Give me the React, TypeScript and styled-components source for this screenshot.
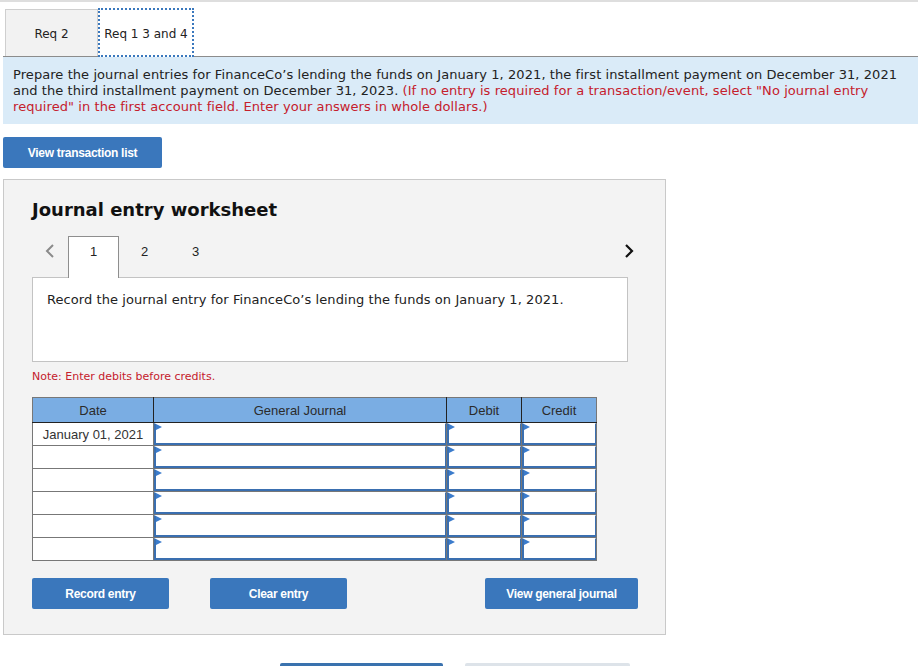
import * as React from "react";
import styled, { createGlobalStyle } from "styled-components";

const GlobalStyle = createGlobalStyle`
	html, body {
		margin: 0;
		padding: 0;
		background: #fff;
	}
	body {
		font-family: "DejaVu Sans", Verdana, sans-serif;
		color: #222;
	}
`;

const Page = styled.div`
	width: 918px;
	border-top: 2px solid #dedede;
`;

const TabBar = styled.div`
	display: flex;
	align-items: flex-end;
	margin: 6px 0 0 3px;
	padding-left: 2px;
	height: 48px;
	border-bottom: 1px solid #8c8c8c;
`;

const ReqTab = styled.div<{ $active?: boolean }>`
	display: flex;
	align-items: center;
	justify-content: center;
	box-sizing: border-box;
	padding-top: 2px;
	height: ${p => (p.$active ? "49px" : "47px")};
	width: ${p => (p.$active ? "96px" : "93px")};
	margin-bottom: ${p => (p.$active ? "-1px" : "0")};
	font-size: 12px;
	color: #222;
	background: ${p => (p.$active ? "#fff" : "#f2f2f2")};
	border: ${p => (p.$active ? "2px dotted #3a78bd" : "1px solid #cfcfcf")};
	border-bottom: ${p => (p.$active ? "2px dotted #3a78bd" : "none")};
`;

const Info = styled.div`
	margin-left: 3px;
	padding: 10px 10px 9px 10px;
	background: #daebf8;
	font-size: 13px;
	line-height: 16px;
	letter-spacing: 0.07px;
	color: #222;
`;

const Red = styled.span`
	color: #c5202c;
`;

const BlueButton = styled.button<{ $width: number }>`
	width: ${p => p.$width}px;
	height: 31px;
	border: none;
	border-radius: 2px;
	background: #3a77bc;
	color: #fff;
	font-family: "Liberation Sans", Arial, sans-serif;
	font-weight: bold;
	font-size: 12px;
	letter-spacing: -0.3px;
	cursor: pointer;
	padding: 0;
`;

const ListRow = styled.div`
	margin: 13px 0 0 3px;
`;

const Panel = styled.div`
	margin: 11px 0 0 3px;
	width: 663px;
	box-sizing: border-box;
	background: #f3f3f3;
	border: 1px solid #c9c9c9;
	padding: 19px 0 25px 28px;
`;

const Title = styled.h2`
	margin: 0;
	font-size: 18px;
	line-height: 22px;
	font-weight: bold;
	color: #111;
`;

const StepRow = styled.div`
	display: flex;
	align-items: flex-end;
	margin-top: 15px;
	width: 615px;
	height: 41px;
`;

const Chevron = styled.div<{ $dark?: boolean }>`
	width: 36px;
	height: 41px;
	display: flex;
	align-items: center;
	justify-content: center;
	color: ${p => (p.$dark ? "#111" : "#8a8a8a")};
	svg {
		margin-top: -12px;
	}
`;

const Spacer = styled.div`
	flex: 1;
`;

const StepTab = styled.div<{ $active?: boolean }>`
	width: 51px;
	height: ${p => (p.$active ? "42px" : "41px")};
	margin-bottom: ${p => (p.$active ? "-1px" : "0")};
	box-sizing: border-box;
	display: flex;
	justify-content: center;
	padding-top: 7px;
	font-family: "Liberation Sans", Arial, sans-serif;
	font-size: 13px;
	color: #222;
	background: ${p => (p.$active ? "#fff" : "transparent")};
	border: ${p => (p.$active ? "1px solid #8e8e8e" : "1px solid transparent")};
	border-bottom: none;
	position: relative;
	z-index: 1;
`;

const Prompt = styled.div`
	width: 596px;
	height: 85px;
	box-sizing: border-box;
	background: #fff;
	border: 1px solid #c3c3c3;
	padding: 14px 14px;
	font-size: 13px;
	line-height: 16px;
	letter-spacing: 0.07px;
	color: #222;
`;

const Note = styled.div`
	margin-top: 8px;
	font-size: 11px;
	line-height: 14px;
	color: #c5202c;
`;

const Table = styled.table`
	margin-top: 13px;
	border-collapse: collapse;
	font-family: "Liberation Sans", Arial, sans-serif;
	font-size: 13px;
	border: 1px solid #777;
`;

const Th = styled.th<{ $w: number }>`
	width: ${p => p.$w}px;
	height: 24px;
	padding: 0;
	background: #7aade3;
	color: #2b2b2b;
	font-weight: normal;
	border-right: 1px solid #222;
	border-bottom: 1px solid #222;
	&:last-child {
		border-right: 1px solid #777;
	}
`;

const DateCell = styled.td`
	height: 22px;
	padding: 0;
	background: #fff;
	border: 1px solid #777;
	text-align: center;
	color: #333;
`;

const InputCell = styled.td`
	height: 22px;
	padding: 0;
	border: 1px solid #777;
	background: #fff;
`;

const Field = styled.div`
	position: relative;
	height: 22px;
	box-sizing: border-box;
	border: 2px solid #3a6fb0;
	border-top: 1px solid #fff;
	border-right-width: 1px;
	&::before {
		content: "";
		position: absolute;
		left: 0;
		top: 0;
		border-top: 3px solid transparent;
		border-bottom: 3px solid transparent;
		border-left: 6px solid #3b7ccc;
	}
`;

const ActionRow = styled.div`
	display: flex;
	align-items: center;
	margin-top: 17px;
	width: 606px;
`;

const Gap = styled.div<{ $w?: number }>`
	width: ${p => (p.$w ? `${p.$w}px` : "auto")};
	flex: ${p => (p.$w ? "none" : "1")};
`;

const Footer = styled.div`
	display: flex;
	gap: 22px;
	margin-top: 28px;
	padding-left: 280px;
`;

const FooterButton = styled.div<{ $light?: boolean }>`
	width: ${p => (p.$light ? "165px" : "163px")};
	height: 40px;
	border-radius: 2px;
	background: ${p => (p.$light ? "#dde3e9" : "#3a72ae")};
`;

const ChevronIcon: React.FC<{ dir: "left" | "right" }> = ({ dir }) => (
	<svg width="10" height="16" viewBox="0 0 10 16">
		<path
			d={dir === "left" ? "M8 2 L2 8 L8 14" : "M2 2 L8 8 L2 14"}
			fill="none"
			stroke="currentColor"
			strokeWidth={dir === "left" ? 2 : 2.2}
		/>
	</svg>
);

const rows = ["January 01, 2021", "", "", "", "", ""];

const App: React.FC = () => {
	return (
		<Page>
			<GlobalStyle />
			<TabBar>
				<ReqTab>Req 2</ReqTab>
				<ReqTab $active>Req 1 3 and 4</ReqTab>
			</TabBar>
			<Info>
				Prepare the journal entries for FinanceCo’s lending the funds on January 1, 2021, the first installment payment on December 31, 2021
				and the third installment payment on December 31, 2023.{" "}
				<Red>
					(If no entry is required for a transaction/event, select "No journal entry required" in the first account field. Enter your answers in whole dollars.)
				</Red>
			</Info>
			<ListRow>
				<BlueButton $width={159}>View transaction list</BlueButton>
			</ListRow>
			<Panel>
				<Title>Journal entry worksheet</Title>
				<StepRow>
					<Chevron>
						<ChevronIcon dir="left" />
					</Chevron>
					<StepTab $active>1</StepTab>
					<StepTab>2</StepTab>
					<StepTab>3</StepTab>
					<Spacer />
					<Chevron $dark>
						<ChevronIcon dir="right" />
					</Chevron>
				</StepRow>
				<Prompt>Record the journal entry for FinanceCo’s lending the funds on January 1, 2021.</Prompt>
				<Note>Note: Enter debits before credits.</Note>
				<Table>
					<thead>
						<tr>
							<Th $w={120}>Date</Th>
							<Th $w={292}>General Journal</Th>
							<Th $w={74}>Debit</Th>
							<Th $w={74}>Credit</Th>
						</tr>
					</thead>
					<tbody>
						{rows.map((d, i) => (
							<tr key={i}>
								<DateCell>{d}</DateCell>
								<InputCell><Field /></InputCell>
								<InputCell><Field /></InputCell>
								<InputCell><Field /></InputCell>
							</tr>
						))}
					</tbody>
				</Table>
				<ActionRow>
					<BlueButton $width={137}>Record entry</BlueButton>
					<Gap $w={41} />
					<BlueButton $width={137}>Clear entry</BlueButton>
					<Gap />
					<BlueButton $width={153}>View general journal</BlueButton>
				</ActionRow>
			</Panel>
			<Footer>
				<FooterButton />
				<FooterButton $light />
			</Footer>
		</Page>
	);
};

export default App;
